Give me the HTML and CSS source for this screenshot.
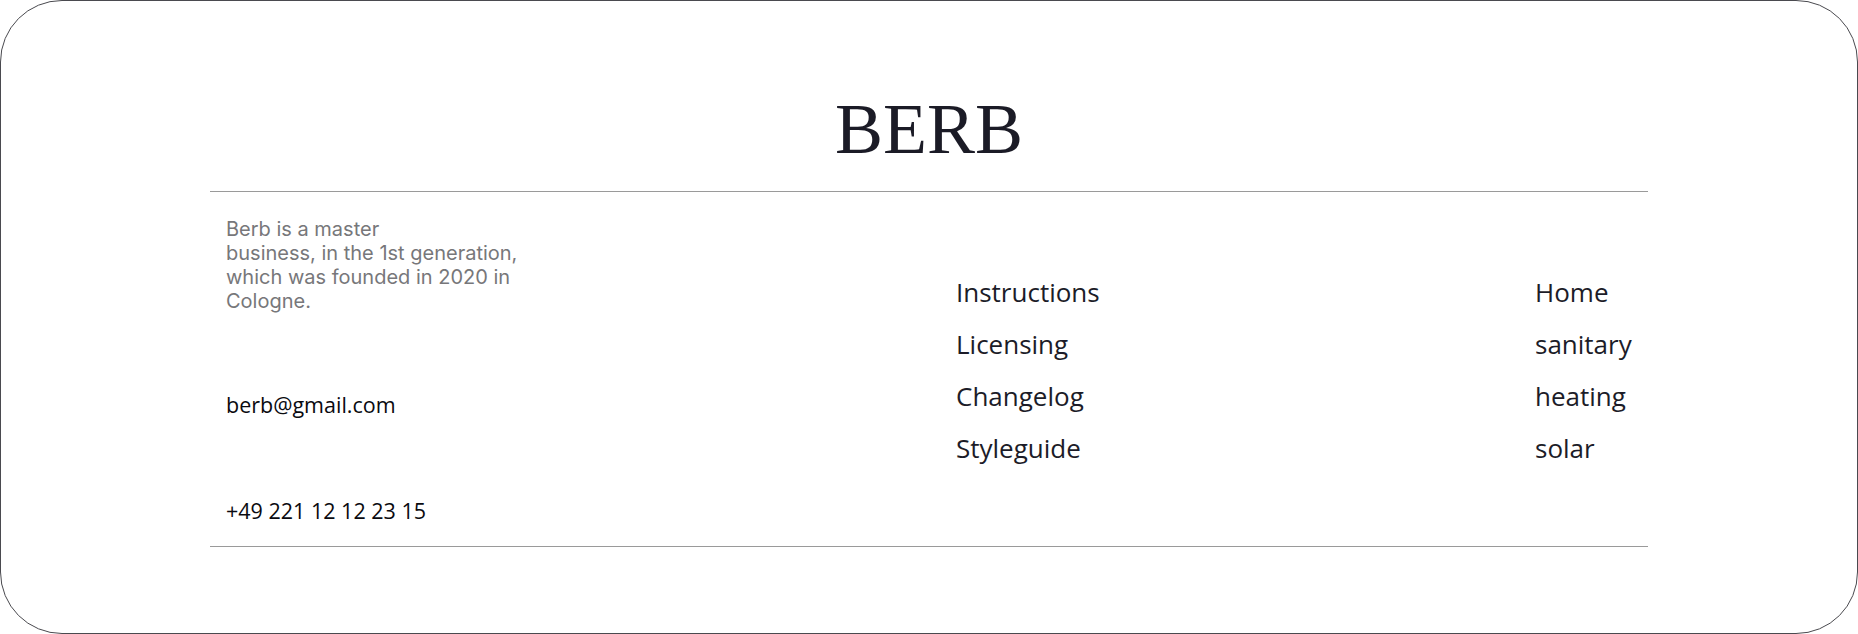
FILE: index.html
```html
<!DOCTYPE html>
<html lang="en">
<head>
<meta charset="utf-8">
<title>BERB</title>
<link rel="stylesheet" href="styles.css">
</head>
<body>
<footer class="card">
  <h1 class="brand">BERB</h1>
  <section class="content">
    <div class="info">
      <p class="about">Berb is a master<br>business, in the 1st generation,<br>which was founded in 2020 in<br>Cologne.</p>
      <a class="contact" href="#">berb@gmail.com</a>
      <a class="contact" href="#">+49 221 12 12 23 15</a>
    </div>
    <nav class="links">
      <a href="#">Instructions</a>
      <a href="#">Licensing</a>
      <a href="#">Changelog</a>
      <a href="#">Styleguide</a>
    </nav>
    <nav class="links">
      <a href="#">Home</a>
      <a href="#">sanitary</a>
      <a href="#">heating</a>
      <a href="#">solar</a>
    </nav>
  </section>
</footer>
</body>
</html>
```

FILE: styles.css
```css
* { box-sizing: border-box; }
html, body { margin: 0; padding: 0; background: #fff; }

.card {
  width: 1858px;
  height: 634px;
  border: 1px solid #4a4a4f;
  border-radius: 62px;
  background: #fff;
  padding-top: 92px;
}

.brand {
  margin: 0 0 26px;
  text-align: center;
  font-family: "Liberation Serif", "Times New Roman", serif;
  font-weight: 400;
  font-size: 72px;
  line-height: 72px;
  color: #1b1b26;
}

.content {
  width: 1438px;
  margin: 0 auto;
  border-top: 1px solid #9a9a9a;
  border-bottom: 1px solid #9a9a9a;
  height: 356px;
  display: grid;
  grid-template-columns: 730px 579px 1fr;
  padding: 25px 0 20px 16px;
}

.info {
  display: flex;
  flex-direction: column;
  align-items: flex-start;
  gap: 78px;
}

.about {
  margin: 0;
  font-family: Inter, "Liberation Sans", sans-serif;
  font-size: 20px;
  line-height: 24px;
  color: #77777a;
}

.contact {
  font-family: "Open Sans", "Noto Sans", sans-serif;
  font-size: 21.5px;
  line-height: 28px;
  color: #0a0a0f;
  text-decoration: none;
}

.links {
  align-self: center;
  display: flex;
  flex-direction: column;
  gap: 16px;
  margin-top: -3px;
}

.links a {
  font-family: "Open Sans", "Noto Sans", sans-serif;
  font-size: 26px;
  line-height: 36px;
  color: #1c1c28;
  text-decoration: none;
}
```
